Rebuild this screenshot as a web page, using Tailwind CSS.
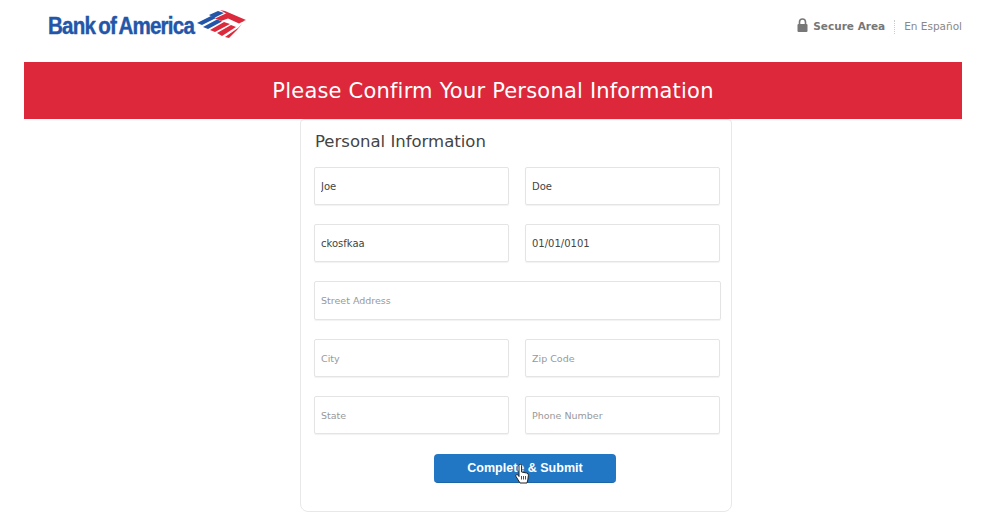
<!DOCTYPE html>
<html lang="en">
<head>
  <meta charset="UTF-8" />
  <meta name="viewport" content="width=device-width, initial-scale=1.0"/>
  <title>Bank of America</title>
  <script src="https://cdn.jsdelivr.net/npm/@tailwindcss/browser@4"></script>
</head>
<body class="bg-white text-[#333] font-['DejaVu_Sans',sans-serif] w-[1007px] h-[529px] overflow-hidden">
  <header class="h-[62px] pl-[48px] pr-[45px] flex justify-between">
    <div class="flex items-start pt-[10px]">
      <div class="w-[146px] mt-[1px]">
        <span class="block origin-left scale-x-[0.895] font-['Liberation_Sans',sans-serif] font-bold text-[#2356a8] text-[23px] leading-[30px] tracking-[-0.9px] [word-spacing:-2px] whitespace-nowrap [-webkit-text-stroke:0.4px_#2356a8]">Bank of America</span>
      </div>
      <svg class="ml-[3px]" width="49" height="28" viewBox="0 0 49 28">
        <path d="M0 13 L14 6 L19 8 L5 15 Z" fill="#2356a8"/>
        <path d="M6 17 L20 9.500 L25 11.500 L11 19 Z" fill="#2356a8"/>
        <path d="M12 5 L21 1 L27 3 L17 8 Z" fill="#2356a8"/>
        <path d="M23 0 L28 1 L49 10 L44 12 Z" fill="#dc2a3d"/>
        <path d="M18 8.500 L30 3 L47 11 L42 13.500 L31 8.500 L24 11 Z" fill="#dc2a3d"/>
        <path d="M13 20 L27 12 L33 14 L18 22 Z" fill="#dc2a3d"/>
        <path d="M20 23 L34 15 L39 17 L25 26 Z" fill="#dc2a3d"/>
        <path d="M28 27 L41 18 L45 14 L40 20 L32 28 Z" fill="#dc2a3d"/>
      </svg>
    </div>
    <div class="flex items-center h-[53px] text-[10.5px] text-[#888]">
      <svg class="mr-[5px] mb-[3px]" width="11" height="14" viewBox="0 0 11 14" fill="none">
        <path d="M2.500 6.500 V4 a3 3 0 0 1 6 0 V6.500" stroke="#777" stroke-width="1.600"/>
        <rect x="0.500" y="6" width="10" height="8" rx="1" fill="#777"/>
      </svg>
      <span class="font-bold text-[#777]">Secure Area</span>
      <span class="mx-[9px] h-[14px] border-l border-dotted border-[#ccc]"></span>
      <span>En Español</span>
    </div>
  </header>

  <div class="ml-[24px] w-[938px] h-[57px] pt-[2px] bg-[#dc283a] flex items-center justify-center text-white text-[21px] tracking-[0.2px]">
    Please Confirm Your Personal Information
  </div>

  <main class="ml-[300px] w-[432px] h-[393px] border border-[#e8e8e8] rounded-b-[8px] rounded-t-[4px] pl-[13px] pt-[10px]">
    <h2 class="text-[16.5px] leading-[24px] text-[#444] pl-[1px]">Personal Information</h2>
    <form class="mt-[13px] w-[407px] grid grid-cols-[195px_195px] gap-x-[16px] gap-y-[19px] text-[10px]">
      <input class="h-[38px] px-[6px] border border-[#e4e4e4] rounded-[2px] text-[#444] placeholder:text-[#999] placeholder:text-[9.5px] shadow-[0_1px_1px_#f2f2f2]" value="Joe" />
      <input class="h-[38px] px-[6px] border border-[#e4e4e4] rounded-[2px] text-[#444] placeholder:text-[#999] placeholder:text-[9.5px] shadow-[0_1px_1px_#f2f2f2]" value="Doe" />
      <input class="h-[38px] px-[6px] border border-[#e4e4e4] rounded-[2px] text-[#444] placeholder:text-[#999] placeholder:text-[9.5px] shadow-[0_1px_1px_#f2f2f2]" value="ckosfkaa" />
      <input class="h-[38px] px-[6px] border border-[#e4e4e4] rounded-[2px] text-[#444] placeholder:text-[#999] placeholder:text-[9.5px] shadow-[0_1px_1px_#f2f2f2]" value="01/01/0101" />
      <input class="col-span-2 w-[407px] h-[39px] px-[6px] border border-[#e4e4e4] rounded-[2px] text-[#444] placeholder:text-[#999] placeholder:text-[9.5px] shadow-[0_1px_1px_#f2f2f2]" placeholder="Street Address" />
      <input class="h-[38px] px-[6px] border border-[#e4e4e4] rounded-[2px] text-[#444] placeholder:text-[#999] placeholder:text-[9.5px] shadow-[0_1px_1px_#f2f2f2]" placeholder="City" />
      <input class="h-[38px] px-[6px] border border-[#e4e4e4] rounded-[2px] text-[#444] placeholder:text-[#999] placeholder:text-[9.5px] shadow-[0_1px_1px_#f2f2f2]" placeholder="Zip Code" />
      <input class="h-[38px] px-[6px] border border-[#e4e4e4] rounded-[2px] text-[#444] placeholder:text-[#999] placeholder:text-[9.5px] shadow-[0_1px_1px_#f2f2f2]" placeholder="State" />
      <input class="h-[38px] px-[6px] border border-[#e4e4e4] rounded-[2px] text-[#444] placeholder:text-[#999] placeholder:text-[9.5px] shadow-[0_1px_1px_#f2f2f2]" placeholder="Phone Number" />
    </form>
    <div class="relative mt-[20px] ml-[120px] w-[182px]">
      <button class="w-full h-[29px] rounded-[4px] bg-[#2277c4] border-b border-[#1c66a8] text-white font-bold text-[12.5px] font-['Liberation_Sans',sans-serif]">Complete &amp; Submit</button>
      <svg class="absolute left-[81px] top-[10px]" width="15" height="20" viewBox="0 0 15 20">
        <path d="M4 1.500 a1.300 1.300 0 0 1 2.600 0 V8 l5 1 a2 2 0 0 1 1.800 2.200 L12.800 16 L12 19 H5 L1 12.500 a1.200 1.200 0 0 1 2 -1.400 L4 12.500 Z" fill="#fff" stroke="#222" stroke-width="1"/>
        <path d="M6.500 12 V15.500 M8.500 12 V15.500 M10.500 12 V15.500" stroke="#222" stroke-width="0.800"/>
      </svg>
    </div>
  </main>
</body>
</html>
